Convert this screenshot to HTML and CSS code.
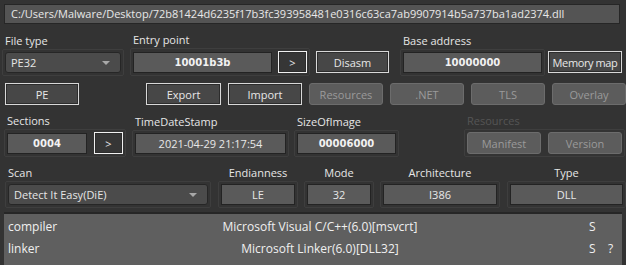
FILE: index.html
```html
<!DOCTYPE html>
<html lang="en">
<head>
  <meta charset="UTF-8">
  <title>Detect It Easy</title>
  <link rel="stylesheet" href="styles.css">
</head>
<body>
  <div class="path">C:/Users/Malware/Desktop/72b81424d6235f17b3fc393958481e0316c63ca7ab9907914b5a737ba1ad2374.dll</div>

  <div class="row row1">
    <div class="group g-filetype">
      <div class="label">File type</div>
      <div class="frame">
        <div class="combo combo-type">PE32<span class="arrow"></span></div>
      </div>
    </div>
    <div class="group g-entry">
      <div class="label">Entry point</div>
      <div class="frame">
        <div class="value bold v-entry">10001b3b</div>
        <button class="btn btn-go">&gt;</button>
      </div>
    </div>
    <button class="btn btn-disasm">Disasm</button>
    <div class="group g-base">
      <div class="label">Base address</div>
      <div class="frame">
        <div class="value bold v-base">10000000</div>
      </div>
    </div>
    <button class="btn btn-memmap">Memory map</button>
  </div>

  <div class="row row2">
    <button class="btn btn-pe">PE</button>
    <button class="btn btn-export">Export</button>
    <button class="btn btn-w">Import</button>
    <button class="btn btn-w disabled">Resources</button>
    <button class="btn btn-w disabled">.NET</button>
    <button class="btn btn-w disabled">TLS</button>
    <button class="btn btn-w disabled">Overlay</button>
  </div>

  <div class="row row3">
    <div class="group g-sections">
      <div class="label">Sections</div>
      <div class="frame">
        <div class="value bold v-sections">0004</div>
        <button class="btn btn-go">&gt;</button>
      </div>
    </div>
    <div class="group g-stamp">
      <div class="label">TimeDateStamp</div>
      <div class="frame">
        <div class="value v-stamp">2021-04-29 21:17:54</div>
      </div>
    </div>
    <div class="group g-size">
      <div class="label">SizeOfImage</div>
      <div class="frame">
        <div class="value bold v-size">00006000</div>
      </div>
    </div>
    <div class="group g-res">
      <div class="label off">Resources</div>
      <div class="frame">
        <button class="btn btn-w disabled">Manifest</button>
        <button class="btn btn-w disabled">Version</button>
      </div>
    </div>
  </div>

  <div class="row row4">
    <div class="group g-scan">
      <div class="label">Scan</div>
      <div class="frame">
        <div class="combo combo-scan">Detect It Easy(DiE)<span class="arrow"></span></div>
      </div>
    </div>
    <div class="group g-endian">
      <div class="label center">Endianness</div>
      <div class="frame"><div class="value v-endian">LE</div></div>
    </div>
    <div class="group g-mode">
      <div class="label center">Mode</div>
      <div class="frame"><div class="value v-mode">32</div></div>
    </div>
    <div class="group g-arch">
      <div class="label center">Architecture</div>
      <div class="frame"><div class="value v-arch">I386</div></div>
    </div>
    <div class="group g-kind">
      <div class="label center">Type</div>
      <div class="frame"><div class="value v-kind">DLL</div></div>
    </div>
  </div>

  <div class="results">
    <div class="result">
      <span class="r-name">compiler</span>
      <span class="r-text">Microsoft Visual C/C++(6.0)[msvcrt]</span>
      <span class="r-flag">S</span>
      <span class="r-info"></span>
    </div>
    <div class="result">
      <span class="r-name">linker</span>
      <span class="r-text">Microsoft Linker(6.0)[DLL32]</span>
      <span class="r-flag">S</span>
      <span class="r-info">?</span>
    </div>
  </div>
</body>
</html>
```

FILE: styles.css
```css
* {
  box-sizing: border-box;
}

body {
  margin: 0;
  width: 626px;
  height: 265px;
  overflow: hidden;
  background: #333333;
  color: #e6e6e6;
  font-family: 'Open Sans', 'Liberation Sans', sans-serif;
  font-size: 11px;
}

.path {
  margin: 4px 6px 0 4px;
  height: 20px;
  line-height: 18px;
  padding-left: 6px;
  background: #545454;
  border: 1px solid #262626;
  color: #e8e8e8;
  white-space: nowrap;
  overflow: hidden;
}

.row {
  display: flex;
  align-items: flex-end;
}

.group {
  display: flex;
  flex-direction: column;
}

.label {
  height: 16px;
  line-height: 16px;
  padding-left: 3px;
  color: #e6e6e6;
}

.label.center {
  text-align: center;
  padding-left: 0;
}

.label.off {
  color: #555555;
}

.frame {
  display: flex;
  align-items: center;
  gap: 7px;
  padding: 2px;
  border: 1px solid #3e3e3e;
  border-radius: 2px;
}

.value {
  height: 21px;
  line-height: 19px;
  background: #5a5a5a;
  border: 1px solid #232323;
  text-align: center;
  color: #e8e8e8;
}

.value.bold {
  font-family: 'DejaVu Sans', sans-serif;
  font-weight: bold;
  font-size: 10px;
  color: #f2f2f2;
}

.combo {
  position: relative;
  height: 21px;
  line-height: 19px;
  padding-left: 5px;
  background: #4b4b4b;
  border: 1px solid #262626;
  border-radius: 3px;
}

.arrow {
  position: absolute;
  right: 10px;
  top: 8px;
  width: 0;
  height: 0;
  border-left: 4px solid transparent;
  border-right: 4px solid transparent;
  border-top: 4px solid #a8a8a8;
}

.btn {
  height: 22px;
  padding: 0;
  font: inherit;
  color: #e8e8e8;
  background: #474747;
  border: 1px solid #d8d8d8;
  box-shadow: inset 0 0 0 1px #2c2c2c;
}

.btn-go {
  width: 29px;
  background: #363636;
  border-color: #f0f0f0;
}

.btn.disabled {
  color: #9a9a9a;
  background: #5c5c5c;
  border: 1px solid #6c6c6c;
  border-radius: 3px;
  box-shadow: none;
}

/* row 1 */
.row1 {
  margin-top: 8px;
}

.g-filetype {
  margin-left: 2px;
}

.combo-type {
  width: 116px;
}

.g-entry {
  margin-left: 6px;
}

.g-entry .frame {
  gap: 6px;
}

.v-entry {
  width: 139px;
}

.btn-disasm {
  width: 73px;
  margin-left: 6px;
  margin-bottom: 3px;
}

.g-base {
  margin-left: 11px;
}

.v-base {
  width: 139px;
}

.btn-memmap {
  width: 74px;
  margin-left: 3px;
  margin-bottom: 3px;
  letter-spacing: -0.4px;
  white-space: nowrap;
}

/* row 2 */
.row2 {
  margin-top: 7px;
  gap: 7px;
}

.btn-pe {
  width: 74px;
  margin-left: 5px;
}

.btn-export {
  width: 75px;
  margin-left: 60px;
}

.btn-w {
  width: 74px;
}

/* row 3 */
.row3 {
  margin-top: 8px;
}

.g-sections {
  margin-left: 4px;
}

.v-sections {
  width: 80px;
}

.g-stamp {
  margin-left: 6px;
}

.v-stamp {
  width: 151px;
}

.g-size {
  margin-left: 5px;
}

.v-size {
  width: 99px;
}

.g-res {
  margin-left: 65px;
}

/* row 4 */
.row4 {
  margin-top: 8px;
}

.g-scan {
  margin-left: 5px;
}

.combo-scan {
  width: 200px;
}

.g-endian {
  margin-left: 7px;
}

.v-endian {
  width: 74px;
}

.g-mode {
  margin-left: 6px;
}

.v-mode {
  width: 64px;
}

.g-arch {
  margin-left: 6px;
}

.v-arch {
  width: 114px;
}

.g-kind {
  margin-left: 7px;
}

.v-kind {
  width: 113px;
}

/* results */
.results {
  margin: 4px 4px 0 4px;
  height: 60px;
  background: #5f5f5f;
  border-top: 2px solid #262626;
  padding-top: 2px;
  font-size: 12px;
}

.result {
  display: flex;
  height: 22px;
  line-height: 22px;
  color: #f0f0f0;
}

.r-name {
  width: 131px;
  padding-left: 4px;
}

.r-text {
  width: 370px;
  text-align: center;
}

.r-flag {
  width: 19px;
  margin-left: 84px;
}

.r-info {
  width: 12px;
}
```
